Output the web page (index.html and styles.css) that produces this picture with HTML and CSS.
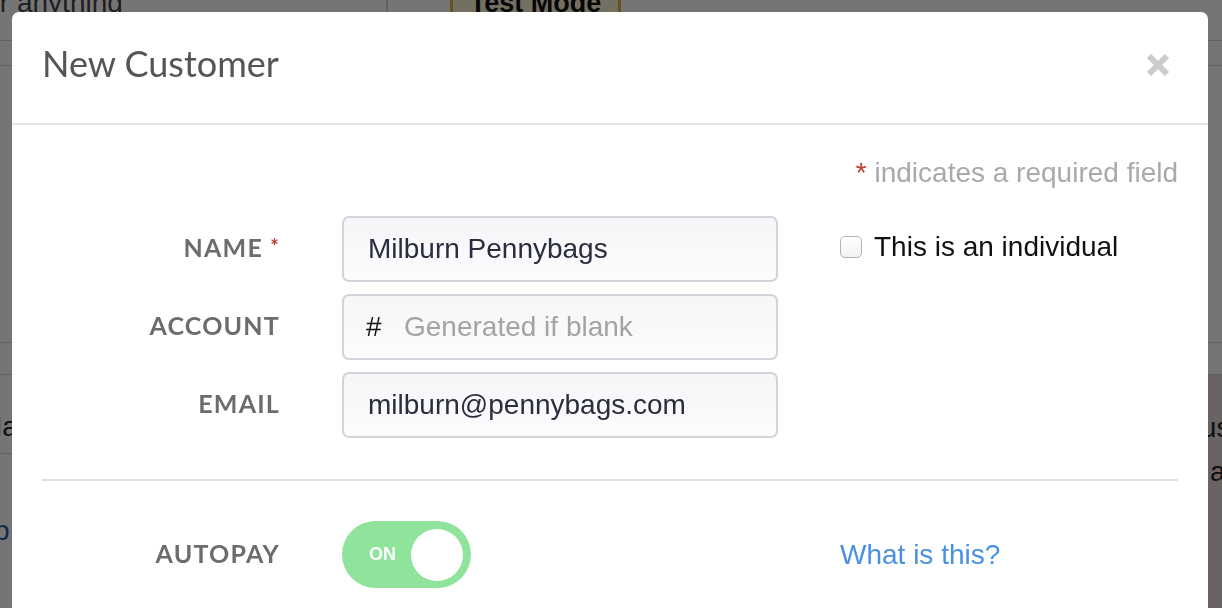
FILE: index.html
```html
<!DOCTYPE html>
<html lang="en">
<head>
<meta charset="utf-8">
<title>New Customer</title>
<link rel="stylesheet" href="styles.css">
</head>
<body>
<div class="page">
  <header class="topbar">
    <div class="search">Search for anything</div>
    <div class="testmode">Test Mode</div>
  </header>
  <div class="subbar"></div>
  <div class="content">
    <div class="row-head"></div>
    <div class="row-main">
      <div class="cell-left">
        <div class="cell-a">Na</div>
        <div class="cell-b">b</div>
      </div>
      <div class="cell-right">
        <div class="cell-r1">Status</div>
        <div class="cell-r2">a</div>
      </div>
    </div>
  </div>
</div>

<div class="backdrop"></div>

<div class="modal">
  <div class="modal-header">
    <h2 class="modal-title">New Customer</h2>
    <svg class="close" width="24" height="24" viewBox="0 0 24 24" aria-label="Close">
      <path d="M3 3 L21 21 M21 3 L3 21" stroke="#cbcbcb" stroke-width="6" fill="none"/>
    </svg>
  </div>
  <div class="modal-body">
    <div class="required-note"><span class="req">*</span> indicates a required field</div>

    <div class="form-grid">
      <label class="field-label">Name <span class="req">*</span></label>
      <input class="text-input" type="text" value="Milburn Pennybags">
      <label class="check-label"><span class="checkbox"></span>This is an individual</label>

      <label class="field-label">Account</label>
      <div class="text-input prefixed"><span class="prefix">#</span><input class="bare-input" type="text" placeholder="Generated if blank"></div>
      <span></span>

      <label class="field-label">Email</label>
      <input class="text-input" type="text" value="milburn@pennybags.com">
      <span></span>
    </div>

    <hr class="divider">

    <div class="form-grid autopay-row">
      <label class="field-label">Autopay</label>
      <div class="toggle-cell"><div class="toggle"><span class="toggle-text">ON</span><span class="knob"></span></div></div>
      <a class="help-link" href="#">What is this?</a>
    </div>
  </div>
</div>
</body>
</html>
```

FILE: styles.css
```css
html, body {
  margin: 0;
  padding: 0;
}
body {
  width: 1222px;
  height: 608px;
  overflow: hidden;
  background: #ffffff;
  font-family: "Liberation Sans", Arial, sans-serif;
}

/* background page */
.page {
  width: 1222px;
  height: 608px;
  overflow: hidden;
}
.topbar {
  display: flex;
  height: 40px;
  border-bottom: 1px solid #d8d8d8;
  overflow: hidden;
}
.search {
  width: 388px;
  box-sizing: border-box;
  border-right: 2px solid #cfcfcf;
  font-size: 28px;
  line-height: 30px;
  margin-top: -12px;
  text-indent: -120px;
  color: #444;
  white-space: nowrap;
  overflow: hidden;
}
.testmode {
  margin-left: 62px;
  width: 171px;
  box-sizing: border-box;
  border-left: 3px solid #e0b43c;
  border-right: 3px solid #e0b43c;
  background: #fbf3d6;
  font-weight: bold;
  font-size: 27px;
  line-height: 30px;
  margin-top: -12px;
  text-align: center;
  color: #111;
}
.subbar {
  height: 24px;
  border-bottom: 1px solid #d8d8d8;
}
.content {
  padding-top: 276px;
}
.row-head {
  height: 31px;
  border-top: 1px solid #d8d8d8;
  border-bottom: 1px solid #d8d8d8;
}
.row-main {
  display: flex;
  justify-content: space-between;
  font-size: 28px;
  color: #222;
}
.cell-left {
  width: 60px;
}
.cell-a {
  height: 79px;
  border-bottom: 1px solid #d8d8d8;
  box-sizing: border-box;
  padding-top: 35px;
  line-height: 34px;
  margin-left: -18px;
}
.cell-b {
  margin-left: -6px;
  padding-top: 60px;
  line-height: 34px;
  color: #1f5fa8;
}
.cell-right {
  width: 64px;
  height: 240px;
  background: #e4d8d8;
  line-height: 34px;
  padding-top: 36px;
  box-sizing: border-box;
  white-space: nowrap;
  overflow: hidden;
}
.cell-r1 {
  margin-left: -7px;
}
.cell-r2 {
  margin-top: 10px;
  margin-left: 52px;
}

/* overlay */
.backdrop {
  position: fixed;
  inset: 0;
  background: rgba(0, 0, 0, 0.54);
}
.modal {
  position: absolute;
  top: 12px;
  left: 12px;
  width: 1196px;
  height: 596px;
  overflow: hidden;
  background: #ffffff;
  border-radius: 7px 7px 0 0;
}
.modal-header {
  height: 101px;
  padding: 0 38px 10px 30px;
  display: flex;
  align-items: center;
  justify-content: space-between;
  border-bottom: 2px solid #e6e6e6;
}
.modal-title {
  margin: 0;
  font-family: Lato, "Liberation Sans", sans-serif;
  font-weight: 400;
  font-size: 36px;
  color: #555555;
}
.close {
  display: block;
  align-self: flex-start;
  margin-top: 41px;
}
.modal-body {
  padding: 31px 30px 0 30px;
}
.required-note {
  text-align: right;
  font-size: 28px;
  line-height: 34px;
  color: #a9a9a9;
  margin-bottom: 26px;
}
.req {
  color: #c0392b;
}
.form-grid {
  display: grid;
  grid-template-columns: 238px 436px 1fr;
  column-gap: 62px;
  row-gap: 12px;
  align-items: center;
}
.field-label {
  text-align: right;
  font-family: Lato, "Liberation Sans", sans-serif;
  font-weight: 700;
  font-size: 25px;
  line-height: 30px;
  letter-spacing: 1.2px;
  text-transform: uppercase;
  color: #6c6c6c;
  margin-top: -5px;
}
.field-label .req {
  font-size: 20px;
  vertical-align: 3px;
}
.text-input {
  box-sizing: border-box;
  width: 436px;
  height: 66px;
  margin: 0;
  border: 2px solid #d2d3db;
  border-radius: 7px;
  background: linear-gradient(#f6f6f9, #fcfcfd);
  padding: 0 24px;
  font-family: "Liberation Sans", Arial, sans-serif;
  font-size: 28px;
  color: #2a2d3e;
  outline: none;
}
.prefixed {
  display: flex;
  align-items: center;
  padding-left: 22px;
}
.prefix {
  color: #111;
  font-size: 28px;
  width: 38px;
  flex: none;
}
.bare-input {
  flex: 1;
  min-width: 0;
  border: 0;
  padding: 0;
  margin: 0;
  background: transparent;
  font-family: "Liberation Sans", Arial, sans-serif;
  font-size: 28px;
  color: #2a2d3e;
  outline: none;
}
.bare-input::placeholder {
  color: #a3a3a3;
  opacity: 1;
}
.check-label {
  display: flex;
  align-items: center;
  font-size: 28px;
  color: #111;
  margin-top: -4px;
}
.checkbox {
  width: 22px;
  height: 22px;
  box-sizing: border-box;
  border: 1.5px solid #b3b3b3;
  border-radius: 5px;
  background: linear-gradient(#ffffff, #f2f2f2);
  margin-right: 12px;
  flex: none;
}
.divider {
  margin: 41px 0 0 0;
  border: 0;
  height: 2px;
  background: #e1e1e1;
}
.autopay-row {
  margin-top: 40px;
}
.autopay-row .field-label {
  margin-top: -3px;
}
.toggle-cell {
  display: flex;
}
.toggle {
  width: 129px;
  height: 67px;
  box-sizing: border-box;
  border-radius: 34px;
  background: #8fe39b;
  display: flex;
  align-items: center;
  justify-content: space-between;
  padding: 0 8px 0 27px;
}
.toggle-text {
  color: #ffffff;
  font-weight: bold;
  font-size: 18px;
}
.knob {
  width: 52px;
  height: 52px;
  border-radius: 50%;
  background: #ffffff;
}
.help-link {
  font-size: 28px;
  color: #4a90e2;
  text-decoration: none;
}
```
